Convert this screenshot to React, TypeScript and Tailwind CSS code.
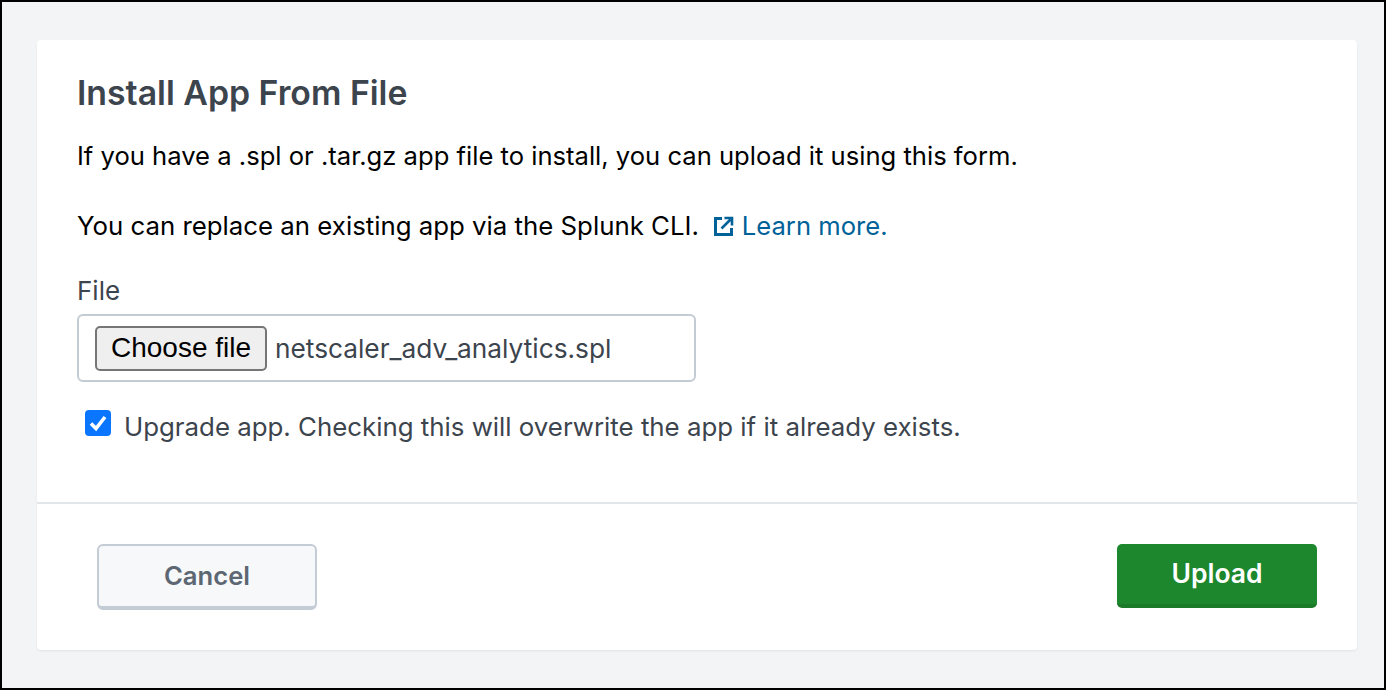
export default function App() {
  return (
    <div className="box-border flex h-[690px] w-[1386px] border-2 border-black bg-[#f2f4f5] pl-[35px] pr-[27px] pt-[38px] pb-[38px] font-['Inter',sans-serif]">
      <div className="flex w-full flex-col rounded-[4px] bg-white shadow-[0_1px_2px_rgba(0,0,0,0.08)]">
        <div className="flex h-[464px] flex-col border-b-2 border-[#e1e6eb] px-10 pt-[33px]">
          <h1 className="h-10 text-[33.8px] leading-10 font-semibold text-[#3c444d]">Install App From File</h1>
          <p className="mt-[28px] h-[30px] text-[25.6px] leading-[30px] text-black">If you have a .spl or .tar.gz app file to install, you can upload it using this form.</p>
          <p className="mt-10 flex h-[30px] items-center text-[25.8px] leading-[30px] text-black">
            <span>You can replace an existing app via the Splunk CLI.</span>
            <span className="ml-[15px] flex items-center gap-[8px] text-[25.6px] text-[#006298]">
              <svg width="20" height="20" viewBox="0 0 20 20" fill="none" stroke="#006298" strokeWidth="3">
                <path d="M8 2.5H1.5V18.5H17.5V12" />
                <path d="M7.5 12.5L16.5 3.5M10.5 2H18V9.5" strokeWidth="2.6" />
              </svg>
              <span>Learn more.</span>
            </span>
          </p>
          <label className="mt-[35px] h-[30px] text-[26px] leading-[30px] text-[#3c444d]">File</label>
          <div className="mt-[8px] flex h-[68px] w-[619px] items-center rounded-[6px] border-2 border-[#c3cbd4] pl-[16px]">
            <button className="box-border flex h-[45px] w-[172px] items-center justify-center rounded-[5px] border-2 border-[#767676] bg-[#efefef] font-['Liberation_Sans',sans-serif] text-[28px] text-black">Choose file</button>
            <span className="ml-[8px] pt-[2px] text-[26.25px] text-[#3c444d]">netscaler_adv_analytics.spl</span>
          </div>
          <div className="mt-[29px] flex h-[30px] items-center pl-[8px]">
            <span className="relative top-[-3px] flex h-[26px] w-[26px] items-center justify-center rounded-[4px] bg-[#0a75ff]">
              <svg width="20" height="20" viewBox="0 0 20 20" fill="none" stroke="white" strokeWidth="3.6">
                <path d="M3 10.5L8 15.5L17 4" />
              </svg>
            </span>
            <span className="ml-[13px] pt-[2px] text-[25.83px] leading-[30px] text-[#3c444d]">Upgrade app. Checking this will overwrite the app if it already exists.</span>
          </div>
        </div>
        <div className="flex flex-1 items-start justify-between pl-[60px] pr-10 pt-[40px]">
          <button className="box-border flex h-[66px] w-[220px] items-center justify-center rounded-[6px] border-2 border-b-4 border-[#c3cbd4] bg-[#f7f8fa] text-[25.6px] font-semibold text-[#5c6773]">Cancel</button>
          <button className="box-border flex h-[64px] w-[200px] items-center justify-center rounded-[5px] border-b-4 border-[#1a7a28] bg-[#1c872d] text-[26.5px] font-semibold text-white">Upload</button>
        </div>
      </div>
    </div>
  );
}
